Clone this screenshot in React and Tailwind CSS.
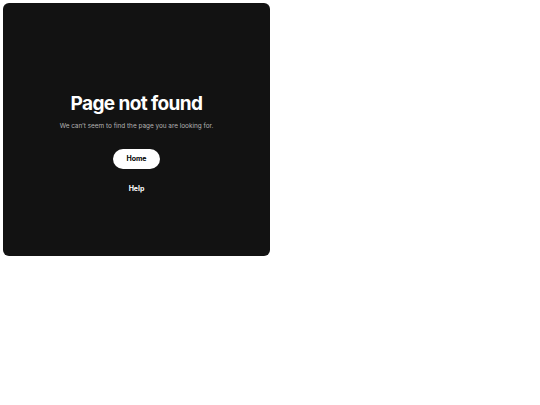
export default function App() {
  return (
    <div className="w-[540px] h-[405px] bg-white p-[3px]" style={{ fontFamily: "Inter, 'Liberation Sans', sans-serif" }}>
      <div className="w-[267px] h-[253px] bg-[#121212] rounded-[6px] flex flex-col items-center pt-[89px]">
        <h1 className="text-[19px] leading-[24px] font-bold text-white tracking-[-0.6px]">Page not found</h1>
        <p className="mt-[5px] text-[6.4px] leading-[10px] text-[#b3b3b3]">We can&#8217;t seem to find the page you are looking for.</p>
        <button className="mt-[18px] w-[47px] h-[20px] rounded-full bg-white text-black text-[7px] font-bold">Home</button>
        <span className="mt-[15px] text-[7px] leading-[10px] font-bold text-white">Help</span>
      </div>
    </div>
  );
}
